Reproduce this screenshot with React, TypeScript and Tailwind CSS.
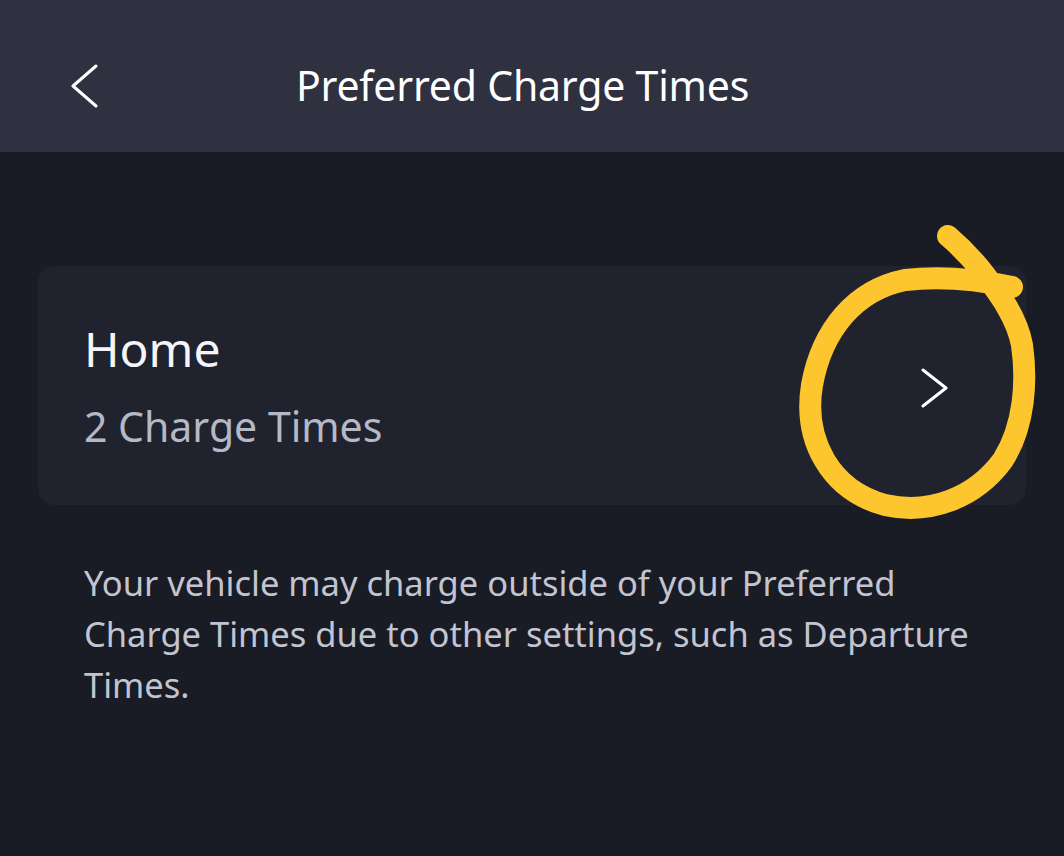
import React from "react";

const font = { fontFamily: '"Noto Sans", "Open Sans", sans-serif' };

const Chevron = ({ dir }: { dir: "left" | "right" }) => (
	<svg width={28} height={44} viewBox="0 0 28 44" className="shrink-0">
		<polyline
			points={dir === "left" ? "25,2 2,22 25,42" : "3,2 26,20 3,38"}
			fill="none"
			stroke="white"
			strokeWidth={3}
			strokeLinecap="round"
			strokeLinejoin="round"
		/>
	</svg>
);

export default function App() {
	return (
		<div
			className="relative w-[1064px] h-[856px] overflow-hidden bg-[#191b25]"
			style={font}
		>
			<header className="h-[152px] bg-[#2f3140] flex items-center pt-[20px] pl-[71px] pr-[64px]">
				<Chevron dir="left" />
				<h1 className="flex-1 text-center text-[41px] text-white pr-[54px] tracking-[-0.2px]">
					Preferred Charge Times
				</h1>
			</header>

			<main className="pt-[114px] px-[38px]">
				<div className="rounded-2xl bg-[#20232e] h-[239px] flex items-center pl-[46px] pr-[78px]">
					<div className="flex-1">
						<p className="text-[48px] text-[#f4f5fa] leading-[56px]">Home</p>
						<p className="text-[41px] text-[#b5b8c5] leading-[50px] mt-[24px]">
							2 Charge Times
						</p>
					</div>
					<div className="pt-2">
						<Chevron dir="right" />
					</div>
				</div>

				<p className="mt-[52px] pl-[46px] w-[950px] text-[34.5px] leading-[51px] text-[#c2c5d1]">
					Your vehicle may charge outside of your Preferred Charge Times due to
					other settings, such as Departure Times.
				</p>
			</main>

			{/* hand-drawn highlight over the chevron */}
			<svg
				className="absolute inset-0 pointer-events-none"
				width={1064}
				height={856}
				viewBox="0 0 1064 856"
			>
				<path
					d="M1012 287 C 980 280, 940 276, 905 280 C 855 290, 822 330, 812 385 C 803 440, 830 490, 885 505 C 930 515, 975 498, 1003 460 C 1025 425, 1027 380, 1022 345 C 1017 318, 1000 295, 985 275 C 975 262, 962 248, 948 236"
					fill="none"
					stroke="#fdc62e"
					strokeWidth={22}
					strokeLinecap="round"
					strokeLinejoin="round"
				/>
			</svg>
		</div>
	);
}
